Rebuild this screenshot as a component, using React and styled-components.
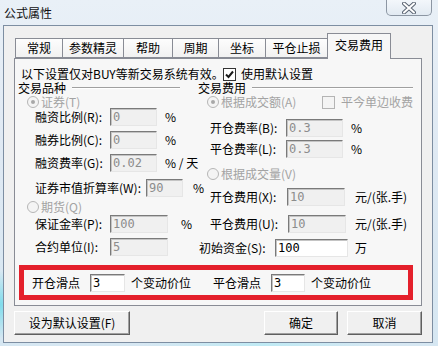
import React from "react";
import styled, { createGlobalStyle } from "styled-components";

const GlobalStyle = createGlobalStyle`
  html, body {
    margin: 0;
    padding: 0;
  }
  body {
    font-family: "Noto Sans CJK SC", "Liberation Sans", sans-serif;
    font-size: 12px;
    line-height: 14px;
    color: #000;
  }
`;

const tabs = [
  { label: "常规", w: 48 },
  { label: "参数精灵", w: 62 },
  { label: "帮助", w: 50 },
  { label: "周期", w: 47 },
  { label: "坐标", w: 48 },
  { label: "平仓止损", w: 63 },
  { label: "交易费用", w: 64, active: true },
];

const Check = () => (
  <svg width="9" height="9" viewBox="0 0 9 9">
    <path d="M1 4.5 L3.5 7 L8 1.5" fill="none" stroke="#1a1a1a" strokeWidth="2" />
  </svg>
);

const CloseGlyph = () => (
  <svg width="14" height="12" viewBox="0 0 14 12">
    <path d="M2 1.5 L12 10.5 M12 1.5 L2 10.5" stroke="#5a6472" strokeWidth="4" strokeLinecap="round" />
    <path d="M2 1.5 L12 10.5 M12 1.5 L2 10.5" stroke="#ffffff" strokeWidth="2" strokeLinecap="round" />
  </svg>
);

const App = () => {
  return (
    <>
      <GlobalStyle />
      <Desktop>
        <TitleBar>
          <Title>公式属性</Title>
          <CloseBtn>
            <CloseGlyph />
          </CloseBtn>
        </TitleBar>

        <Client>
          <TabRow>
            {tabs.map((t, i) => (
              <Tab key={t.label} $w={t.w} $active={t.active} $first={i === 0}>
                {t.label}
              </Tab>
            ))}
          </TabRow>

          <Panel>
            <Notice>
              <NoticeText>以下设置仅对BUY等新交易系统有效。</NoticeText>
              <CheckBox>
                <Check />
              </CheckBox>
              <CheckLabel>使用默认设置</CheckLabel>
            </Notice>

            <Columns>
              <LeftCol>
                <GroupTitle $pl={3}>
                  <span>交易品种</span>
                  <GroupLine $w={108} />
                </GroupTitle>
                <RadioRow $ml={12}>
                  <Radio $checked />
                  <Dim>证券(T)</Dim>
                </RadioRow>
                <FieldRow $mt={-1} $pl={20}>
                  <FieldLabel $w={75}>融资比例(R):</FieldLabel>
                  <Input $w={47} readOnly value="0" />
                  <Unit $ml={8}>%</Unit>
                </FieldRow>
                <FieldRow $mt={5} $pl={20}>
                  <FieldLabel $w={75}>融券比例(C):</FieldLabel>
                  <Input $w={47} readOnly value="0" />
                  <Unit $ml={8}>%</Unit>
                </FieldRow>
                <FieldRow $mt={5} $pl={20}>
                  <FieldLabel $w={75}>融资费率(G):</FieldLabel>
                  <Input $w={47} readOnly value="0.02" />
                  <Unit $ml={8}>% / 天</Unit>
                </FieldRow>
                <FieldRow $mt={7} $pl={20}>
                  <FieldLabel $w={111}>证券市值折算率(W):</FieldLabel>
                  <Input $w={37} readOnly value="90" />
                  <Unit $ml={10}>%</Unit>
                </FieldRow>
                <RadioRow $ml={12} $mt={3}>
                  <Radio />
                  <Dim>期货(Q)</Dim>
                </RadioRow>
                <FieldRow $mt={1} $pl={20}>
                  <FieldLabel $w={75}>保证金率(P):</FieldLabel>
                  <Input $w={58} readOnly value="100" />
                  <Unit $ml={13}>%</Unit>
                </FieldRow>
                <FieldRow $mt={5} $pl={20}>
                  <FieldLabel $w={75}>合约单位(I):</FieldLabel>
                  <Input $w={58} readOnly value="5" />
                </FieldRow>
              </LeftCol>

              <RightCol>
                <GroupTitle>
                  <span>交易费用</span>
                  <GroupLine $w={161} />
                </GroupTitle>
                <RadioRow $ml={9}>
                  <RadioItem>
                    <Radio $checked />
                    <Dim>根据成交额(A)</Dim>
                  </RadioItem>
                  <CheckBox $disabled />
                  <Dim $ml={6}>平今单边收费</Dim>
                </RadioRow>
                <FieldRow $mt={10} $pl={12}>
                  <FieldLabel $w={76}>开仓费率(B):</FieldLabel>
                  <Input $w={57} readOnly value="0.3" />
                  <Unit $ml={8}>%</Unit>
                </FieldRow>
                <FieldRow $mt={3} $pl={12}>
                  <FieldLabel $w={76}>平仓费率(L):</FieldLabel>
                  <Input $w={57} readOnly value="0.3" />
                  <Unit $ml={8}>%</Unit>
                </FieldRow>
                <RadioRow $ml={9} $mt={9}>
                  <Radio />
                  <Dim>根据成交量(V)</Dim>
                </RadioRow>
                <FieldRow $mt={7} $pl={12}>
                  <FieldLabel $w={77}>开仓费用(X):</FieldLabel>
                  <Input $w={58} readOnly value="10" />
                  <Unit $ml={10}>元/(张.手)</Unit>
                </FieldRow>
                <FieldRow $mt={9} $pl={12}>
                  <FieldLabel $w={78}>平仓费用(U):</FieldLabel>
                  <Input $w={58} readOnly value="10" />
                  <Unit $ml={9}>元/(张.手)</Unit>
                </FieldRow>
                <FieldRow $mt={6} $pl={1}>
                  <FieldLabel $w={76}>初始资金(S):</FieldLabel>
                  <Input $w={73} $enabled readOnly value="100" />
                  <Unit $ml={7}>万</Unit>
                </FieldRow>
              </RightCol>
            </Columns>

            <RedBox>
              <span>开仓滑点</span>
              <Input $w={35} $ml={10} $enabled readOnly value="3" />
              <Unit $ml={6}>个变动价位</Unit>
              <Unit $ml={22}>平仓滑点</Unit>
              <Input $w={34} $ml={10} $enabled readOnly value="3" />
              <Unit $ml={6}>个变动价位</Unit>
            </RedBox>
          </Panel>

          <ButtonRow>
            <Button $w={116}>设为默认设置(F)</Button>
            <Button $w={74} $ml="auto">确定</Button>
            <Button $w={75} $ml={9}>取消</Button>
          </ButtonRow>
        </Client>
      </Desktop>
    </>
  );
};

export default App;

const Desktop = styled.div`
  width: 438px;
  height: 346px;
  box-sizing: border-box;
  overflow: hidden;
  display: flex;
  flex-direction: column;
  padding: 0 5px 3px 3px;
  background:
    radial-gradient(circle at 0% 88%, #7fdcec 0, rgba(127, 220, 236, 0) 34px),
    radial-gradient(ellipse at 60% 100%, #bfeaf4 0, rgba(191, 234, 244, 0) 120px),
    linear-gradient(180deg, #e9f0f7 0%, #dfe9f3 45%, #d6e7f2 100%);
`;

const TitleBar = styled.div`
  height: 25px;
  display: flex;
  justify-content: space-between;
  align-items: flex-start;
`;

const Title = styled.div`
  line-height: 25px;
  padding-left: 1px;
  font-size: 12px;
  color: #111;
`;

const CloseBtn = styled.div`
  width: 46px;
  height: 16px;
  box-sizing: border-box;
  margin-right: 1px;
  border: 1px solid #8c96a3;
  border-top: none;
  border-radius: 0 0 5px 5px;
  background: linear-gradient(180deg, #f3f7fb 0%, #e2eaf2 100%);
  display: flex;
  align-items: center;
  justify-content: center;
`;

const Client = styled.div`
  flex: 1;
  border: 1px solid #7d8ea2;
  background: #f0f0f0;
  padding: 7px 10px 5px 10px;
  display: flex;
  flex-direction: column;
`;

const TabRow = styled.div`
  height: 25px;
  display: flex;
  align-items: flex-end;
  padding-left: 1px;
  position: relative;
  z-index: 1;
`;

const Tab = styled.div`
  width: ${(p) => p.$w}px;
  height: ${(p) => (p.$active ? 26 : 20)}px;
  box-sizing: border-box;
  margin-left: ${(p) => (p.$first ? 0 : -1)}px;
  margin-bottom: ${(p) => (p.$active ? -1 : 0)}px;
  border: 1px solid #898c95;
  border-bottom: ${(p) => (p.$active ? "none" : "1px solid #898c95")};
  background: ${(p) =>
    p.$active ? "#f7f7f7" : "linear-gradient(180deg, #fdfdfd 0%, #f1f1f1 100%)"};
  padding-top: ${(p) => (p.$active ? 4 : 2)}px;
  text-align: center;
  font-size: 12px;
  line-height: 14px;
  white-space: nowrap;
`;

const Panel = styled.div`
  border: 1px solid #898c95;
  background: #f7f7f7;
  padding: 8px 0 5px 0;
`;

const Notice = styled.div`
  height: 14px;
  display: flex;
  align-items: center;
  padding-left: 6px;
`;

const NoticeText = styled.span`
  width: 202px;
  white-space: nowrap;
`;

const CheckBox = styled.div`
  width: 13px;
  height: 13px;
  box-sizing: border-box;
  border: 1px solid ${(p) => (p.$disabled ? "#b4b4b4" : "#333")};
  background: ${(p) => (p.$disabled ? "#f4f4f4" : "#fff")};
  display: flex;
  align-items: center;
  justify-content: center;
  flex: none;
`;

const CheckLabel = styled.span`
  margin-left: 5px;
  white-space: nowrap;
`;

const Columns = styled.div`
  height: 175px;
  display: flex;
  align-items: flex-start;
`;

const LeftCol = styled.div`
  width: 183px;
  display: flex;
  flex-direction: column;
`;

const RightCol = styled.div`
  flex: 1;
  display: flex;
  flex-direction: column;
`;

const GroupTitle = styled.div`
  height: 14px;
  display: flex;
  align-items: center;
  padding-left: ${(p) => p.$pl || 0}px;
  white-space: nowrap;
`;

const GroupLine = styled.div`
  width: ${(p) => p.$w}px;
  margin-left: 6px;
  border-top: 1px solid #a0a0a0;
  border-bottom: 1px solid #fff;
`;

const RadioRow = styled.div`
  height: 14px;
  display: flex;
  align-items: center;
  margin-top: ${(p) => p.$mt || 0}px;
  margin-left: ${(p) => p.$ml || 0}px;
  white-space: nowrap;
`;

const RadioItem = styled.div`
  width: 115px;
  display: flex;
  align-items: center;
`;

const Radio = styled.div`
  width: 12px;
  height: 12px;
  box-sizing: border-box;
  border-radius: 50%;
  border: 1px solid #b6b6b6;
  background: #f4f4f4;
  margin-right: 2px;
  display: flex;
  align-items: center;
  justify-content: center;
  flex: none;

  &::after {
    content: "";
    display: ${(p) => (p.$checked ? "block" : "none")};
    width: 4px;
    height: 4px;
    border-radius: 50%;
    background: #a8a8a8;
  }
`;

const Dim = styled.span`
  color: #a3a3a3;
  margin-left: ${(p) => p.$ml || 0}px;
  white-space: nowrap;
`;

const FieldRow = styled.div`
  height: 18px;
  display: flex;
  align-items: center;
  margin-top: ${(p) => p.$mt || 0}px;
  padding-left: ${(p) => p.$pl || 0}px;
  white-space: nowrap;
`;

const FieldLabel = styled.span`
  width: ${(p) => p.$w}px;
  flex: none;
  white-space: nowrap;
`;

const Input = styled.input`
  width: ${(p) => p.$w}px;
  height: 18px;
  box-sizing: border-box;
  margin: 0 0 0 ${(p) => p.$ml || 0}px;
  padding: 0 2px;
  flex: none;
  border: 1px solid;
  border-color: #7a7a7a #e6e6e6 #e6e6e6 #7a7a7a;
  box-shadow: inset 1px 1px 0 #c4c4c4;
  background: ${(p) => (p.$enabled ? "#fff" : "#f0f0f0")};
  color: ${(p) => (p.$enabled ? "#000" : "#8c8c8c")};
  font: 12px "DejaVu Sans Mono", "Liberation Mono", monospace;
  outline: none;
`;

const Unit = styled.span`
  margin-left: ${(p) => p.$ml || 0}px;
  white-space: nowrap;
`;

const RedBox = styled.div`
  height: 35px;
  box-sizing: border-box;
  margin: 9px 8px 0 4px;
  border: 5px solid #e4202b;
  padding-left: 8px;
  display: flex;
  align-items: center;
  white-space: nowrap;
`;

const ButtonRow = styled.div`
  margin-top: 5px;
  height: 24px;
  display: flex;
`;

const Button = styled.div`
  width: ${(p) => p.$w}px;
  height: 24px;
  box-sizing: border-box;
  margin-left: ${(p) => (p.$ml === "auto" ? "auto" : `${p.$ml || 0}px`)};
  border: 1px solid;
  border-color: #ffffff #5f5f5f #5f5f5f #ffffff;
  box-shadow: inset -1px -1px 0 #a0a0a0;
  background: #f0f0f0;
  display: flex;
  align-items: center;
  justify-content: center;
  white-space: nowrap;
`;
